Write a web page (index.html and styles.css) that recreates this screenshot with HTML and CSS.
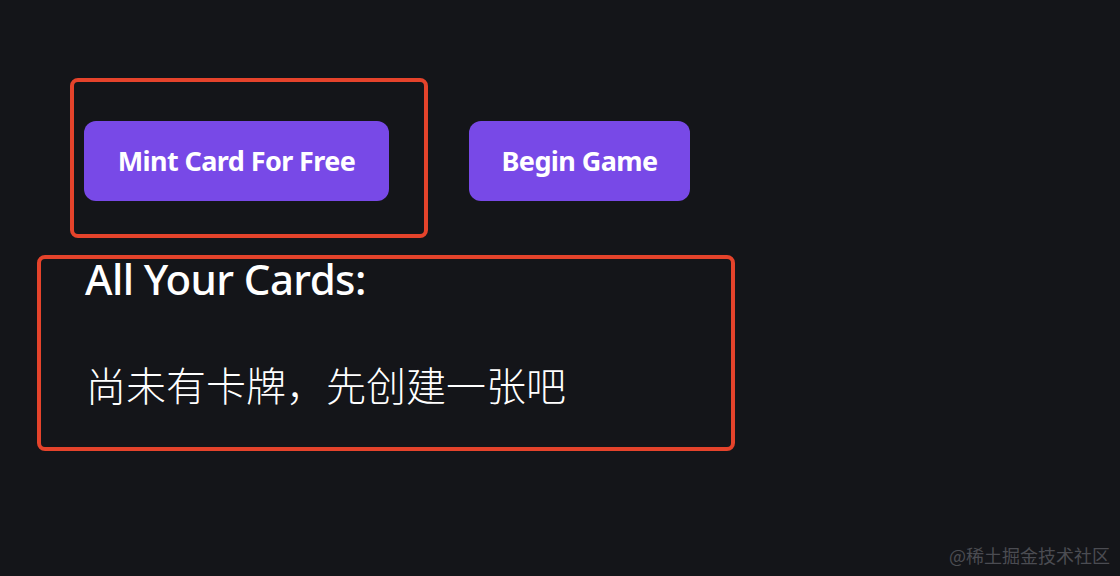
FILE: index.html
```html
<!DOCTYPE html>
<html lang="en">
<head>
<meta charset="utf-8">
<title>Cards</title>
<link rel="stylesheet" href="styles.css">
</head>
<body>
<main class="page">
  <div class="actions">
    <div class="mark mark-btn">
      <button class="btn">Mint Card For Free</button>
    </div>
    <button class="btn btn-game">Begin Game</button>
  </div>
  <section class="mark mark-cards">
    <h2 class="cards-title">All Your Cards:</h2>
    <p class="cards-empty">尚未有卡牌，先创建一张吧</p>
  </section>
</main>
<div class="watermark">@稀土掘金技术社区</div>
</body>
</html>
```
FILE: styles.css
```css
html, body {
  margin: 0;
  height: 100%;
  background: #141519;
  overflow: hidden;
}
body {
  position: relative;
  font-family: "Noto Sans", "Noto Sans CJK SC", sans-serif;
  color: #ffffff;
}
.page {
  padding: 78px 0 0 37px;
}
.actions {
  display: flex;
  align-items: flex-start;
  margin-left: 33px;
}
.mark {
  border: 4px solid #e5432b;
  border-radius: 8px;
  box-sizing: border-box;
}
.mark-btn {
  width: 358px;
  height: 160px;
  padding: 39px 0 0 10px;
}
.btn {
  display: flex;
  align-items: center;
  justify-content: center;
  height: 80px;
  border: 0;
  border-radius: 12px;
  background: #7849e7;
  color: #ffffff;
  font-family: "Noto Sans", sans-serif;
  font-weight: 700;
  font-size: 27px;
  letter-spacing: -0.6px;
  padding: 0 0 2px;
  cursor: pointer;
}
.mark-btn .btn {
  width: 305px;
}
.btn-game {
  width: 221px;
  margin: 43px 0 0 41px;
}
.mark-cards {
  margin-top: 17px;
  width: 698px;
  height: 196px;
  padding: 0 0 0 44px;
}
.cards-title {
  margin: 0;
  font-family: "Noto Sans", sans-serif;
  font-weight: 500;
  font-size: 42px;
  letter-spacing: -0.6px;
  line-height: 40px;
}
.cards-empty {
  margin: 63px 0 0 1px;
  font-family: "Noto Sans CJK SC", sans-serif;
  font-weight: 300;
  font-size: 40px;
  line-height: 44px;
}
.watermark {
  position: absolute;
  right: 10px;
  bottom: 8px;
  font-family: "Noto Sans CJK SC", sans-serif;
  font-size: 18px;
  color: #4b4c52;
}
```
